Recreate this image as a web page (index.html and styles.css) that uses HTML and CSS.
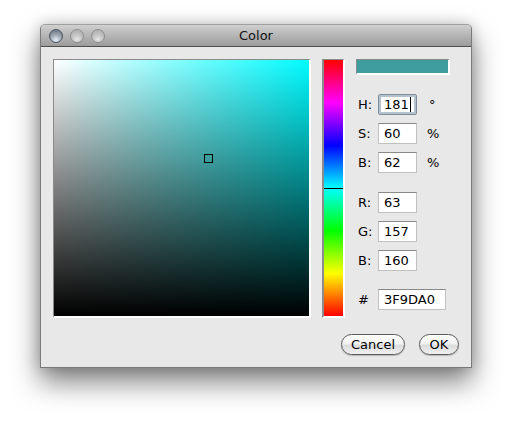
FILE: index.html
```html
<!DOCTYPE html>
<html>
<head>
<meta charset="utf-8">
<link rel="stylesheet" href="styles.css">
</head>
<body>
<div class="window">
  <div class="titlebar">
    <div class="lights">
      <span class="light first"></span>
      <span class="light"></span>
      <span class="light"></span>
    </div>
    <div class="title">Color</div>
  </div>
  <div class="content">
    <div class="main">
      <div class="field">
        <div class="field-dark"></div>
        <div class="marker"></div>
      </div>
      <div class="hue">
        <div class="hue-line"></div>
      </div>
      <div class="side">
        <div class="swatch"></div>
        <div class="group hsb">
          <div class="row"><span class="lbl">H:</span><span class="box focused">181<span class="caret"></span></span><span class="unit deg">°</span></div>
          <div class="row"><span class="lbl">S:</span><span class="box">60</span><span class="unit">%</span></div>
          <div class="row"><span class="lbl">B:</span><span class="box">62</span><span class="unit">%</span></div>
        </div>
        <div class="group rgb">
          <div class="row"><span class="lbl">R:</span><span class="box">63</span></div>
          <div class="row"><span class="lbl">G:</span><span class="box">157</span></div>
          <div class="row"><span class="lbl">B:</span><span class="box">160</span></div>
        </div>
        <div class="row hex"><span class="lbl">#</span><span class="box wide">3F9DA0</span></div>
      </div>
    </div>
    <div class="buttons">
      <span class="btn cancel">Cancel</span>
      <span class="btn ok">OK</span>
    </div>
  </div>
</div>
</body>
</html>
```

FILE: styles.css
```css
html, body {
  margin: 0;
  padding: 0;
  background: #ffffff;
}
body {
  box-sizing: border-box;
  min-height: 423px;
  padding: 24px 0 0 40px;
  font-family: "Lucida Grande", "DejaVu Sans", sans-serif;
  font-size: 13px;
  color: #000;
}
.window {
  width: 430px;
  height: 342px;
  border: 1px solid #7a7a7a;
  border-top-color: #a0a0a0;
  border-radius: 5px 5px 0 0;
  background: #e8e8e8;
  box-shadow: 0 14px 28px rgba(0, 0, 0, 0.5), 0 0 14px rgba(0,0,0,0.18);
  display: flex;
  flex-direction: column;
}
.titlebar {
  height: 21px;
  border-bottom: 1px solid #4e4e4e;
  border-radius: 4px 4px 0 0;
  background: linear-gradient(to bottom, #d0d0d0 0%, #bababa 40%, #9c9c9c 100%);
  position: relative;
  display: flex;
  align-items: center;
  justify-content: center;
}
.lights {
  position: absolute;
  left: 8px;
  top: 4px;
  display: flex;
  gap: 7px;
}
.light {
  width: 12px;
  height: 12px;
  border-radius: 50%;
  border: 1px solid #8e8e8e;
  background: radial-gradient(circle at 50% 80%, #e6e6e6 0%, #c4c4c4 45%, #a9a9a9 100%);
}
.light.first {
  border-color: #4c5560;
  background: radial-gradient(circle at 50% 85%, #e8eef6 0%, #a8b2bf 40%, #5d6875 100%);
}
.title {
  font-size: 13px;
  color: #111;
  line-height: 21px;
}
.content {
  flex: 1;
  display: flex;
  flex-direction: column;
  padding: 12px 0 0 12px;
}
.main {
  display: flex;
  align-items: flex-start;
}
.field {
  position: relative;
  width: 255px;
  height: 256px;
  border-top: 1px solid #8a8a8a;
  border-left: 1px solid #8a8a8a;
  border-right: 2px solid #fff;
  border-bottom: 2px solid #fff;
  background: linear-gradient(to right, #ffffff, #00fbff);
}
.field-dark {
  position: absolute;
  inset: 0;
  background: linear-gradient(to bottom, rgba(0,0,0,0), #000);
}
.marker {
  position: absolute;
  left: 150px;
  top: 94px;
  width: 7px;
  height: 7px;
  border: 1px solid #000;
}
.hue {
  position: relative;
  margin-left: 11px;
  width: 19px;
  height: 256px;
  border-top: 1px solid #8c8c8c;
  border-left: 2px solid #8c8c8c;
  border-right: 2px solid #fff;
  border-bottom: 2px solid #fff;
  background: linear-gradient(to bottom, #ff0000 0%, #ff00ff 16.67%, #0000ff 33.33%, #00ffff 50%, #00ff00 66.67%, #ffff00 83.33%, #ff0000 100%);
}
.hue-line {
  position: absolute;
  left: 0;
  right: 0;
  top: 128px;
  height: 1px;
  background: #000;
}
.side {
  margin-left: 11px;
  display: flex;
  flex-direction: column;
}
.swatch {
  width: 91px;
  height: 13px;
  border-top: 1px solid #8a8a8a;
  border-left: 1px solid #8a8a8a;
  border-right: 2px solid #fff;
  border-bottom: 2px solid #fff;
  background: #3f9da0;
}
.group {
  display: flex;
  flex-direction: column;
  gap: 8px;
}
.hsb { margin-top: 19px; }
.rgb { margin-top: 19px; }
.hex { margin-top: 18px; }
.row {
  display: flex;
  align-items: center;
  height: 21px;
}
.lbl {
  width: 22px;
  padding-left: 2px;
  box-sizing: border-box;
  font-size: 13px;
}
.box {
  position: relative;
  box-sizing: border-box;
  width: 39px;
  height: 21px;
  line-height: 19px;
  padding-left: 5px;
  background: #fff;
  border: 1px solid #c0c0c0;
  border-top-color: #8a8a8a;
  font-size: 13px;
}
.box.wide { width: 68px; }
.box.focused {
  border: 1px solid #7f8b97;
  box-shadow: inset 0 0 0 2px #b4c2d0;
  border-radius: 2px;
}
.caret {
  display: inline-block;
  width: 1px;
  height: 15px;
  background: #000;
  vertical-align: -3px;
  margin-left: 1px;
}
.unit {
  margin-left: 10px;
  font-size: 13px;
}
.unit.deg { margin-left: 12px; }
.buttons {
  display: flex;
  justify-content: flex-end;
  gap: 14px;
  margin-top: 16px;
  padding-right: 12px;
}
.btn {
  box-sizing: border-box;
  height: 21px;
  line-height: 19px;
  border: 1px solid #5a5a5a;
  border-radius: 11px;
  text-align: center;
  font-size: 13px;
  background: linear-gradient(to bottom, #ffffff 0%, #f2f2f2 45%, #dcdcdc 55%, #f0f0f0 100%);
  box-shadow: 0 1px 1px rgba(0,0,0,0.2);
}
.cancel { width: 64px; }
.ok { width: 40px; }
```
